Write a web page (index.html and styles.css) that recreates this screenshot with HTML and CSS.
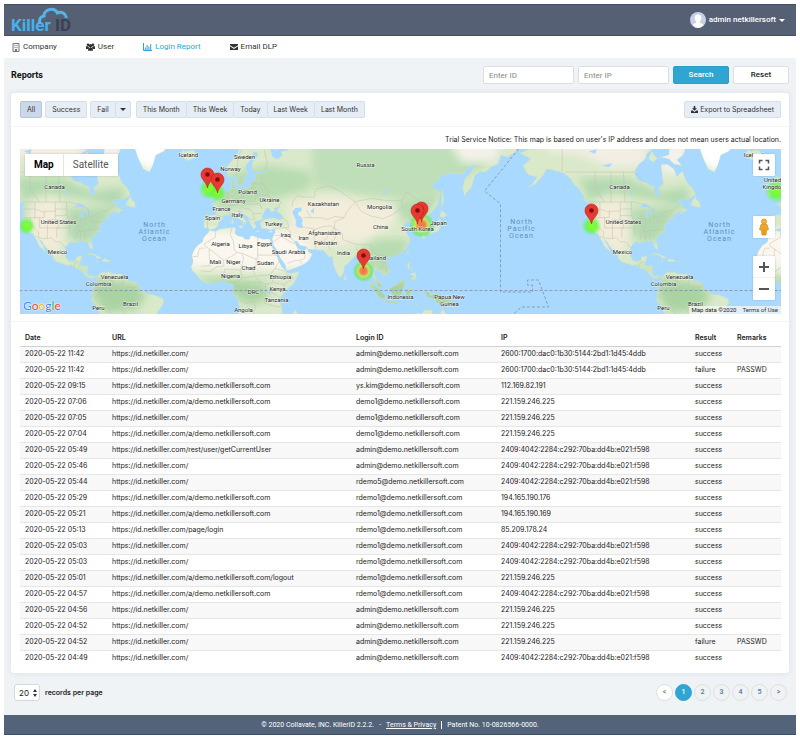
FILE: index.html
```html
<!DOCTYPE html>
<html lang="en">
<head>
    <meta charset="UTF-8">
    <meta name="viewport" content="width=device-width, initial-scale=1.0">
    <title>KillerID - Login Report</title>
    <link rel="stylesheet" href="styles.css">
</head>
<body>
    <header class="topbar">
        <a href="#" class="logo">
            <svg class="cloud" width="32" height="18" viewBox="0 0 32 18"><path d="M1.500 17C1 11 3 9.500 6 9C5.500 3 16 -1 19.500 6C24 4 28 7 28.500 11" fill="none" stroke="#57b4e8" stroke-width="3"/></svg>
            <span class="logo-killer">Killer</span> <span class="logo-id">ID</span>
        </a>
        <button class="account">
            <svg width="16" height="16" viewBox="0 0 16 16"><circle cx="8" cy="8" r="8" fill="#c9cfe4"/><path d="M8 2.500c2.300 0 3.500 1.600 3.300 3.800c-.1 1.500-.8 2.600-1.500 3.200v1.200c1.800.5 3.100 1 3.400 2.500A8 8 0 0 1 8 16a8 8 0 0 1-5.200-2.800c.3-1.500 1.600-2 3.400-2.500V9.500C5.500 8.900 4.800 7.800 4.700 6.300C4.500 4.100 5.700 2.500 8 2.500z" fill="#fff"/></svg>
            admin netkillersoft
            <span class="caret"></span>
        </button>
    </header>
    <nav>
        <ul>
            <li><a href="#"><svg width="8" height="9" viewBox="0 0 8 9"><path d="M1 .5h6v8H1z" fill="#f4f4f4" stroke="#777"/><path d="M2.500 2h1v1h-1zM4.500 2h1v1h-1zM2.500 4h1v1h-1zM4.500 4h1v1h-1zM3 6h2v2.500H3z" fill="#777"/></svg>Company</a></li>
            <li><a href="#"><svg width="9" height="8" viewBox="0 0 9 8"><path d="M2 .5a1.300 1.300 0 1 1 0 2.600a1.300 1.300 0 0 1 0-2.600zM7 .5a1.300 1.300 0 1 1 0 2.600a1.300 1.300 0 0 1 0-2.600zM4.500 1a1.700 1.700 0 1 1 0 3.400a1.700 1.700 0 0 1 0-3.400zM0 3.300h2.300l.7 1.200L2 6H0zM9 3.300H6.700L6 4.500L7 6h2zM2 7.800c0-2.300.6-3.200 2.500-3.200s2.500.9 2.500 3.200z" fill="#333"/></svg>User</a></li>
            <li><a href="#" class="active"><svg width="9" height="8" viewBox="0 0 9 8"><path d="M.5 0v7.500H9M2.300 7V4.500M4.100 7V2M5.900 7V3.500M7.700 7V1" fill="none" stroke="#2fa4d4"/></svg>Login Report</a></li>
            <li><a href="#"><svg width="8" height="8" viewBox="0 0 8 8"><path d="M0 1h8v1.200L4 4.800L0 2.200zM0 3.300l4 2.600l4-2.600V7H0z" fill="#333"/></svg>Email DLP</a></li>
        </ul>
    </nav>
    <main>
        <div class="title-row">
            <h1>Reports</h1>
            <form class="search">
                <input type="text" placeholder="Enter ID" aria-label="Enter ID">
                <input type="text" placeholder="Enter IP" aria-label="Enter IP">
                <button type="button" class="btn-search">Search</button>
                <button type="reset" class="btn-reset">Reset</button>
            </form>
        </div>
        <section class="panel">
            <div class="toolbar">
                <button class="btn active">All</button>
                <button class="btn">Success</button>
                <div class="group">
                    <button class="btn">Fail</button>
                    <button class="btn more" aria-label="More"><span class="caret"></span></button>
                </div>
                <div class="group range">
                    <button class="btn">This Month</button>
                    <button class="btn">This Week</button>
                    <button class="btn">Today</button>
                    <button class="btn">Last Week</button>
                    <button class="btn">Last Month</button>
                </div>
                <button class="btn export"><svg width="7" height="7" viewBox="0 0 7 7"><path d="M2.700 0h1.600v2.300H6L3.500 4.800L1 2.300h1.700zM0 4.500h1.700l1.800 1.400l1.800-1.400H7V7H0z" fill="#333"/></svg>Export to Spreadsheet</button>
            </div>
            <div class="map-block">
                <p class="notice">Trial Service Notice: This map is based on user's IP address and does not mean users actual location.</p>
                <div class="map">
                    <svg class="map-canvas" viewBox="0 0 762 165" preserveAspectRatio="xMidYMid slice">
                        <defs>
                            <clipPath id="land-clip"><path id="clip-path"/></clipPath>
                            <filter id="soft"><feGaussianBlur stdDeviation="4"/></filter>
                            <radialGradient id="heat">
                                <stop offset="0" stop-color="#f5703c"/>
                                <stop offset=".3" stop-color="#f5803c" stop-opacity=".9"/>
                                <stop offset=".5" stop-color="#d8e040" stop-opacity=".8"/>
                                <stop offset=".75" stop-color="#5cf04a" stop-opacity=".7"/>
                                <stop offset="1" stop-color="#5cf04a" stop-opacity="0"/>
                            </radialGradient>
                            <radialGradient id="cool">
                                <stop offset="0" stop-color="#8cff20"/>
                                <stop offset=".5" stop-color="#62fa3c" stop-opacity=".85"/>
                                <stop offset="1" stop-color="#62fa3c" stop-opacity="0"/>
                            </radialGradient>
                            <g id="pin">
                                <path d="M0 0C-.8-6-6.500-8-6.500-13.500a6.500 6.500 0 0 1 13 0C6.500-8 .8-6 0 0z" fill="#e8382f" stroke="#b8231c" stroke-width=".6"/>
                                <circle cy="-13.500" r="2.300" fill="#7c0f12"/>
                            </g>
                        </defs>
                        <rect width="762" height="165" fill="#a9d9fe"/>
                        <g id="world">
                            <path id="land" fill="#d9e9c9" stroke="#c4dfce" stroke-width=".5"/>
                            <g id="biomes" clip-path="url(#land-clip)"></g>
                            <path id="lakes" fill="#a9d9fe"/>
                            <path id="borders" fill="none" stroke="#c3bfb0" stroke-width=".5"/>
                        </g>
                        <use href="#world" x="565"/>
                        <g class="lines">
                            <path d="M0 141.500H762"/>
                            <path d="M499 0L465 42L481 55V143H513V136H508V131H519L529 158H502L494 165"/>
                        </g>
                        <circle cx="7" cy="77" r="9" fill="url(#cool)"/>
                        <circle cx="190" cy="40" r="11" fill="url(#cool)"/>
                        <circle cx="198" cy="44" r="9" fill="url(#cool)"/>
                        <circle cx="757" cy="42" r="12" fill="url(#cool)"/>
                        <circle cx="572" cy="77" r="10" fill="url(#cool)"/>
                        <circle cx="402" cy="76" r="13" fill="url(#heat)"/>
                        <circle cx="344" cy="122" r="11" fill="url(#heat)"/>
                        <g class="labels">
                            <text x="35" y="40">Canada</text><text x="39" y="75">United States</text><text x="38" y="105">Mexico</text>
                            <text x="95" y="130">Venezuela</text><text x="79" y="137">Colombia</text><text x="79" y="161">Peru</text><text x="111" y="157">Brazil</text>
                            <text x="600" y="40">Canada</text><text x="604" y="75">United States</text><text x="603" y="105">Mexico</text>
                            <text x="660" y="130">Venezuela</text><text x="644" y="137">Colombia</text><text x="644" y="161">Peru</text><text x="676" y="157">Brazil</text>
                            <text x="169" y="8">Iceland</text><text x="734" y="8">Iceland</text>
                            <text x="225" y="10">Sweden</text><text x="211" y="22">Norway</text><text x="228" y="45">Poland</text>
                            <text x="214" y="54">Germany</text><text x="250" y="53">Ukraine</text><text x="202" y="62">France</text>
                            <text x="193" y="71">Spain</text><text x="218" y="68">Italy</text><text x="254" y="77">Turkey</text>
                            <text x="346" y="18">Russia</text><text x="304" y="57">Kazakhstan</text><text x="360" y="60">Mongolia</text>
                            <text x="361" y="80">China</text><text x="266" y="88">Iraq</text><text x="284" y="91">Iran</text>
                            <text x="305" y="86">Afghanistan</text><text x="306" y="96">Pakistan</text><text x="201" y="97">Algeria</text>
                            <text x="226" y="99">Libya</text><text x="245" y="97">Egypt</text><text x="269" y="105">Saudi Arabia</text>
                            <text x="324" y="106">India</text><text x="355" y="111">Thailand</text><text x="196" y="115">Mali</text>
                            <text x="214" y="115">Niger</text><text x="246" y="116">Sudan</text><text x="229" y="121">Chad</text>
                            <text x="211" y="129">Nigeria</text><text x="261" y="130">Ethiopia</text><text x="234" y="145">DRC</text>
                            <text x="258" y="142">Kenya</text><text x="257" y="153">Tanzania</text><text x="224" y="163">Angola</text>
                            <text x="381" y="150">Indonesia</text><text x="430" y="150">Papua New</text><text x="430" y="157">Guinea</text>
                            <text x="419" y="76">Japan</text><text x="398" y="82">South Korea</text>
                            <text x="753" y="33">United</text><text x="755" y="40">Kingdom</text>
                        </g>
                        <g class="oceans">
                            <text x="135" y="78">North</text><text x="135" y="85">Atlantic</text><text x="135" y="92">Ocean</text>
                            <text x="502" y="75">North</text><text x="502" y="82">Pacific</text><text x="502" y="89">Ocean</text>
                            <text x="700" y="78">North</text><text x="700" y="85">Atlantic</text><text x="700" y="92">Ocean</text>
                        </g>
                        <use href="#pin" x="188" y="39"/>
                        <use href="#pin" x="198" y="44"/>
                        <use href="#pin" x="402" y="73"/>
                        <use href="#pin" x="398" y="75"/>
                        <use href="#pin" x="344" y="120"/>
                        <use href="#pin" x="572" y="75"/>
                    </svg>
                    <div class="map-type">
                        <button class="selected">Map</button>
                        <button>Satellite</button>
                    </div>
                    <div class="map-tools">
                        <button aria-label="Fullscreen"><svg width="12" height="12" viewBox="0 0 12 12"><path d="M1.500 4.500v-3h3M7.500 1.500h3v3M10.500 7.500v3h-3M4.500 10.500h-3v-3" fill="none" stroke="#555" stroke-width="1.500"/></svg></button>
                        <button class="pegman" aria-label="Street View"><svg width="12" height="18" viewBox="0 0 12 18"><path d="M3 6.500h6l1.500 5l-1.800.8L8 17H4l-.7-4.700l-1.800-.8z" fill="#f2a51f" stroke="#c77f13" stroke-width=".6"/><circle cx="6" cy="3.500" r="2.600" fill="#f6b436" stroke="#c77f13" stroke-width=".6"/><path d="M6 11v6" stroke="#c77f13" stroke-width=".6"/></svg></button>
                        <div class="zoom">
                            <button aria-label="Zoom in"><svg width="12" height="12" viewBox="0 0 12 12"><path d="M1 6h10M6 1v10" stroke="#555" stroke-width="2"/></svg></button>
                            <button aria-label="Zoom out"><svg width="12" height="12" viewBox="0 0 12 12"><path d="M1 6h10" stroke="#555" stroke-width="2"/></svg></button>
                        </div>
                    </div>
                    <a href="#" class="google"><span class="g-blue">G</span><span class="g-red">o</span><span class="g-yellow">o</span><span class="g-blue">g</span><span class="g-green">l</span><span class="g-red">e</span></a>
                    <div class="map-legal"><span>Map data ©2020</span><a href="#">Terms of Use</a></div>
                </div>
            </div>
            <div class="table-block">
                <table>
                    <colgroup>
                        <col class="c-date"><col class="c-url"><col class="c-login"><col class="c-ip"><col class="c-result"><col class="c-remarks">
                    </colgroup>
                    <thead>
                        <tr><th>Date</th><th>URL</th><th>Login ID</th><th>IP</th><th>Result</th><th>Remarks</th></tr>
                    </thead>
                    <tbody>
                        <tr><td>2020-05-22 11:42</td><td>https://id.netkiller.com/</td><td>admin@demo.netkillersoft.com</td><td>2600:1700:dac0:1b30:5144:2bd1:1d45:4ddb</td><td>success</td><td></td></tr>
                        <tr><td>2020-05-22 11:42</td><td>https://id.netkiller.com/</td><td>admin@demo.netkillersoft.com</td><td>2600:1700:dac0:1b30:5144:2bd1:1d45:4ddb</td><td>failure</td><td>PASSWD</td></tr>
                        <tr><td>2020-05-22 09:15</td><td>https://id.netkiller.com/a/demo.netkillersoft.com</td><td>ys.kim@demo.netkillersoft.com</td><td>112.169.82.191</td><td>success</td><td></td></tr>
                        <tr><td>2020-05-22 07:06</td><td>https://id.netkiller.com/a/demo.netkillersoft.com</td><td>demo1@demo.netkillersoft.com</td><td>221.159.246.225</td><td>success</td><td></td></tr>
                        <tr><td>2020-05-22 07:05</td><td>https://id.netkiller.com/</td><td>demo1@demo.netkillersoft.com</td><td>221.159.246.225</td><td>success</td><td></td></tr>
                        <tr><td>2020-05-22 07:04</td><td>https://id.netkiller.com/a/demo.netkillersoft.com</td><td>demo1@demo.netkillersoft.com</td><td>221.159.246.225</td><td>success</td><td></td></tr>
                        <tr><td>2020-05-22 05:49</td><td>https://id.netkiller.com/rest/user/getCurrentUser</td><td>admin@demo.netkillersoft.com</td><td>2409:4042:2284:c292:70ba:dd4b:e021:f598</td><td>success</td><td></td></tr>
                        <tr><td>2020-05-22 05:46</td><td>https://id.netkiller.com/</td><td>admin@demo.netkillersoft.com</td><td>2409:4042:2284:c292:70ba:dd4b:e021:f598</td><td>success</td><td></td></tr>
                        <tr><td>2020-05-22 05:44</td><td>https://id.netkiller.com/</td><td>rdemo5@demo.netkillersoft.com</td><td>2409:4042:2284:c292:70ba:dd4b:e021:f598</td><td>success</td><td></td></tr>
                        <tr><td>2020-05-22 05:29</td><td>https://id.netkiller.com/a/demo.netkillersoft.com</td><td>rdemo1@demo.netkillersoft.com</td><td>194.165.190.176</td><td>success</td><td></td></tr>
                        <tr><td>2020-05-22 05:21</td><td>https://id.netkiller.com/a/demo.netkillersoft.com</td><td>rdemo1@demo.netkillersoft.com</td><td>194.165.190.169</td><td>success</td><td></td></tr>
                        <tr><td>2020-05-22 05:13</td><td>https://id.netkiller.com/page/login</td><td>rdemo1@demo.netkillersoft.com</td><td>85.209.178.24</td><td>success</td><td></td></tr>
                        <tr><td>2020-05-22 05:03</td><td>https://id.netkiller.com/</td><td>rdemo1@demo.netkillersoft.com</td><td>2409:4042:2284:c292:70ba:dd4b:e021:f598</td><td>success</td><td></td></tr>
                        <tr><td>2020-05-22 05:03</td><td>https://id.netkiller.com/</td><td>rdemo1@demo.netkillersoft.com</td><td>2409:4042:2284:c292:70ba:dd4b:e021:f598</td><td>success</td><td></td></tr>
                        <tr><td>2020-05-22 05:01</td><td>https://id.netkiller.com/a/demo.netkillersoft.com/logout</td><td>rdemo1@demo.netkillersoft.com</td><td>221.159.246.225</td><td>success</td><td></td></tr>
                        <tr><td>2020-05-22 04:57</td><td>https://id.netkiller.com/a/demo.netkillersoft.com</td><td>rdemo1@demo.netkillersoft.com</td><td>2409:4042:2284:c292:70ba:dd4b:e021:f598</td><td>success</td><td></td></tr>
                        <tr><td>2020-05-22 04:56</td><td>https://id.netkiller.com/</td><td>admin@demo.netkillersoft.com</td><td>221.159.246.225</td><td>success</td><td></td></tr>
                        <tr><td>2020-05-22 04:52</td><td>https://id.netkiller.com/</td><td>admin@demo.netkillersoft.com</td><td>221.159.246.225</td><td>success</td><td></td></tr>
                        <tr><td>2020-05-22 04:52</td><td>https://id.netkiller.com/</td><td>admin@demo.netkillersoft.com</td><td>221.159.246.225</td><td>failure</td><td>PASSWD</td></tr>
                        <tr><td>2020-05-22 04:49</td><td>https://id.netkiller.com/</td><td>admin@demo.netkillersoft.com</td><td>2409:4042:2284:c292:70ba:dd4b:e021:f598</td><td>success</td><td></td></tr>
                    </tbody>
                </table>
            </div>
        </section>
        <div class="pager">
            <label class="per-page">
                <span class="select-wrap">
                    <select><option>20</option><option>50</option><option>100</option></select>
                    <svg width="4" height="8" viewBox="0 0 4 8"><path d="M2 0l2 3H0zM2 8L0 5h4z" fill="#333"/></svg>
                </span>
                records per page
            </label>
            <div class="pages">
                <a href="#" class="prev">&lt;</a>
                <a href="#" class="current">1</a>
                <a href="#">2</a>
                <a href="#">3</a>
                <a href="#">4</a>
                <a href="#">5</a>
                <a href="#" class="next">&gt;</a>
            </div>
        </div>
    </main>
    <footer>
        <span>© 2020 Collavate, INC. KillerID 2.2.2.</span>
        <span>-</span>
        <a href="#">Terms &amp; Privacy</a>
        <span class="patent">Patent No. 10-0826566-0000.</span>
    </footer>
    <script src="map.js"></script>
</body>
</html>
```

FILE: styles.css
```css
* {
    box-sizing: border-box;
}
body {
    margin: 4px;
    font-family: Roboto, "Liberation Sans", sans-serif;
    font-size: 8px;
    line-height: 10px;
    color: #222;
    background-color: #fff;
}
button, input, select {
    font: inherit;
    color: inherit;
    margin: 0;
}
button {
    cursor: pointer;
}
svg {
    display: block;
    flex-shrink: 0;
}
.caret {
    display: inline-block;
    border: 3px solid transparent;
    border-top-color: currentColor;
    border-bottom: 0;
}

/* header */
.topbar {
    display: flex;
    justify-content: space-between;
    align-items: center;
    height: 32px;
    padding: 0 10px 0 7px;
    background-color: #566075;
    border-top: 1px solid #464f62;
    border-bottom: 1px solid #464f62;
}
.logo {
    position: relative;
    padding-top: 10px;
    font-size: 17px;
    line-height: 18px;
    font-weight: 700;
    text-decoration: none;
}
.cloud {
    position: absolute;
    left: 27px;
    top: 1px;
}
.logo-killer {
    color: #48b0ea;
}
.logo-id {
    color: #3a414f;
}
.account {
    display: flex;
    align-items: center;
    gap: 3px;
    padding: 0;
    border: 0;
    background: none;
    color: #fff;
    font-weight: 500;
}
.account .caret {
    margin-right: 1px;
}

/* navigation */
nav ul {
    display: flex;
    gap: 29px;
    height: 22px;
    margin: 0;
    padding: 0 8px;
    align-items: center;
    list-style-type: none;
}
nav a {
    display: flex;
    align-items: center;
    gap: 3px;
    color: #333;
    text-decoration: none;
}
nav a.active {
    color: #2fa4d4;
}

main {
    padding: 8px 7px 14px;
    background-color: #eff3f6;
}
.title-row {
    display: flex;
    justify-content: space-between;
    align-items: center;
}
h1 {
    margin: 0;
    font-size: 9px;
    font-weight: 700;
    color: #111;
}
.search {
    display: flex;
    gap: 4px;
}
.search input {
    width: 91px;
    height: 18px;
    padding: 0 5px;
    border: 1px solid #dcdfe3;
    border-radius: 2px;
    background-color: #fff;
}
.search input::placeholder {
    color: #888;
}
.search button {
    width: 56px;
    height: 18px;
    padding: 0;
    border-radius: 2px;
    font-weight: 500;
}
.btn-search {
    border: 1px solid #2d9fca;
    background-color: #2fa5d2;
    color: #fff;
}
.btn-reset {
    border: 1px solid #dcdfe3;
    background-color: #fff;
}

/* report panel */
.panel {
    margin-top: 9px;
    font-family: Inter, Roboto, sans-serif;
    font-size: 7px;
    background-color: #fff;
    border-radius: 3px;
    box-shadow: 0 0 6px rgba(80, 100, 120, 0.12);
}
.toolbar {
    display: flex;
    gap: 3px;
    padding: 8px 8px 8px 9px;
    border-bottom: 1px solid #f5f6f7;
}
.btn {
    display: flex;
    align-items: center;
    justify-content: center;
    gap: 2px;
    height: 17px;
    padding: 0 6px;
    border: 1px solid #d6e0ea;
    border-radius: 2px;
    background-color: #e6edf5;
    color: #333;
}
.btn.active {
    background-color: #cbd8ea;
    border-color: #b3c5dc;
}
.btn.more {
    padding: 0 4px;
}
.group {
    display: flex;
}
.group .btn + .btn {
    margin-left: -1px;
}
.range {
    margin-left: 2px;
}
.export {
    margin-left: auto;
}
.map-block {
    padding: 8px 8px 7px 9px;
    border-bottom: 1px solid #f3f4f5;
}
.notice {
    margin: 0 0 4px;
    text-align: right;
}

/* map */
.map {
    position: relative;
    font-family: Roboto, sans-serif;
}
.map-canvas {
    width: 100%;
    height: 165px;
}
.lines {
    fill: none;
    stroke: #7f8fa8;
    stroke-width: 1;
    stroke-dasharray: 3 2;
    opacity: 0.8;
}
.labels {
    font-size: 6px;
    fill: #222;
    text-anchor: middle;
    stroke: rgba(255, 255, 255, 0.7);
    stroke-width: 1px;
    paint-order: stroke;
}
.oceans {
    font-size: 7px;
    letter-spacing: 1px;
    fill: #5b8fc4;
    text-anchor: middle;
}
.map button {
    display: flex;
    align-items: center;
    justify-content: center;
    height: 22px;
    padding: 0;
    border: 0;
    background-color: #fff;
}
.map-type {
    position: absolute;
    left: 5px;
    top: 5px;
    display: flex;
    font-size: 10px;
    box-shadow: 0 0 2px rgba(0, 0, 0, 0.2);
}
.map-type button {
    padding: 0 9px;
    color: #555;
}
.map-type .selected {
    color: #000;
    font-weight: 700;
    border-right: 1px solid #e6e6e6;
}
.map-tools {
    position: absolute;
    right: 6px;
    top: 5px;
    width: 22px;
}
.map-tools button {
    width: 22px;
    border-radius: 1px;
    box-shadow: 0 0 2px rgba(0, 0, 0, 0.2);
}
.map-tools .pegman {
    margin: 40px 0 18px;
}
.google {
    position: absolute;
    left: 3px;
    bottom: 1px;
    font-family: Lato, sans-serif;
    font-size: 12px;
    line-height: 14px;
    text-decoration: none;
    text-shadow: 0 0 1px #fff, 0 0 1px #fff, 0 0 2px #fff;
}
.g-blue {
    color: #4285f4;
}
.g-red {
    color: #ea4335;
}
.g-yellow {
    color: #f5b400;
}
.g-green {
    color: #34a853;
}
.map-legal {
    position: absolute;
    right: 0;
    bottom: 0;
    display: flex;
    gap: 6px;
    padding: 0 3px;
    font-size: 6px;
    line-height: 8px;
    background-color: rgba(245, 245, 245, 0.75);
}
.map-legal a {
    color: #333;
    text-decoration: none;
}

/* log table */
.table-block {
    padding: 8px 8px 7px 9px;
}
table {
    width: 100%;
    table-layout: fixed;
    border-collapse: collapse;
    line-height: 8px;
}
.c-date {
    width: 87px;
}
.c-login {
    width: 145px;
}
.c-ip {
    width: 194px;
}
.c-result {
    width: 42px;
}
.c-remarks {
    width: 49px;
}
th, td {
    height: 16px;
    padding: 0 0 0 5px;
    text-align: left;
    white-space: nowrap;
}
th {
    font-weight: 600;
    border-bottom: 1px solid #cfd2d5;
}
td {
    border-top: 1px solid #e5e6e7;
}
tbody tr:nth-child(odd) {
    background-color: #f8f8f8;
}

/* pager */
.pager {
    display: flex;
    justify-content: space-between;
    align-items: center;
    margin-top: 11px;
    padding: 0 2px 0 3px;
}
.per-page {
    display: flex;
    align-items: center;
    gap: 5px;
    font-family: Inter, Roboto, sans-serif;
    font-size: 7px;
    font-weight: 600;
}
.select-wrap {
    position: relative;
}
.select-wrap svg {
    position: absolute;
    right: 3px;
    top: 5px;
    pointer-events: none;
}
select {
    display: block;
    appearance: none;
    width: 26px;
    height: 17px;
    padding: 0 4px;
    border: 1px solid #d4d8dc;
    border-radius: 3px;
    background-color: #fff;
    font-size: 8px;
    font-weight: 400;
}
.pages {
    display: flex;
    gap: 2px;
}
.pages a {
    width: 17px;
    height: 17px;
    border: 1px solid #dddfe1;
    border-radius: 50%;
    line-height: 15px;
    font-size: 7px;
    font-weight: 500;
    text-align: center;
    text-decoration: none;
    color: #4a78ad;
    background-color: #f0f2f4;
}
.pages .prev {
    color: #777;
    background-color: #fff;
}
.pages .current {
    color: #fff;
    border-color: #2fa5d2;
    background-color: #2fa5d2;
}

footer {
    display: flex;
    justify-content: center;
    align-items: center;
    gap: 5px;
    height: 20px;
    font-size: 7px;
    color: #fff;
    background-color: #53647a;
    border-bottom: 1px solid #3f4d60;
}
footer a {
    color: #fff;
}
.patent {
    padding-left: 5px;
    border-left: 1px solid #fff;
    line-height: 8px;
}
```

FILE: map.js
```js
// Mercator world, 565px round the equator
const SCALE = 565 / 360;
const R = 565 / (2 * Math.PI);

function project(lon, lat) {
    const y = Math.log(Math.tan(Math.PI / 4 + lat * Math.PI / 360));
    return (199 + lon * SCALE).toFixed(1) + ' ' + (141.5 - R * y).toFixed(1);
}

// "lon,lat lon,lat ..." -> path data
function toPath(points, closed) {
    const coords = points.split(' ').map(p => {
        const [lon, lat] = p.split(',').map(Number);
        return project(lon, lat);
    });
    return 'M' + coords.join('L') + (closed ? 'Z' : '');
}

const land = [
    // North America
    '-168,72 -162,66.5 -168,65.5 -161,64 -166,62 -164,60 -162,59 -157,58.5 -160,56 -164,54.5 -158,56 -153,59 -151,61 -146,60.5 -140,59.7 -136,58 -133,55.5 -130,54 -127,51 -123,49 -124.5,48 -124,46 -124.5,43 -124,40 -122,37 -120.5,34.6 -118,34 -117,32 -115.5,30 -114,27 -112,25.5 -110,23 -111.5,26.5 -113,29 -114.8,31.5 -112.5,30 -111,27.5 -109,25.5 -107,24 -105.5,21.5 -105.5,20 -103,18 -100,17 -96,15.8 -94,16.2 -92,14.5 -88,13 -86,11 -85,9.8 -83,8.3 -80.5,7.3 -79,8.8 -77.5,7.5 -77,8.7 -80,9.4 -82.5,9.2 -83.7,11 -83.3,15 -86,15.8 -88.6,15.8 -88,18 -87,21.4 -90.3,21 -91,18.7 -94.5,18.2 -96.5,19.5 -97.8,22.5 -97.2,27 -94.5,29.5 -91,29.3 -89,29 -89,30.3 -85,29.8 -83.5,30 -82.7,27.5 -81,25.2 -80.1,26.5 -81.4,31 -78,34 -75.6,35.4 -76.2,38 -74,39.5 -73.5,41 -70,41.8 -70.7,43 -67,44.7 -64.5,45.2 -66,43.6 -61,45.5 -64,46.5 -65,48.8 -70,47.5 -66,50.2 -60,50.2 -56,52 -58,54.5 -61.5,56.5 -64.5,60.2 -68,58.5 -70,61 -74,62.3 -78,62.3 -77.5,60 -77,57.5 -76.6,56 -79.5,54.7 -79,51.5 -81,51.5 -82.3,53 -82.3,55.2 -85,55.4 -88,56.6 -92.5,57.2 -94.5,59 -94.5,60.5 -92,62.5 -88,64 -87,65.5 -84,66.3 -81.5,68 -82,72',
    // Baffin and Southampton
    '-80,72 -72,68 -73,65 -78,64.4 -73,64 -70,62.6 -65,62 -68,63.7 -64,65 -62,67 -66,72',
    '-86,64 -83,63 -80.5,64 -84,66',
    // Newfoundland, Vancouver
    '-59.3,47.8 -55.5,46.9 -53,46.7 -53.3,49 -55.5,50 -56,51.5 -58,49.5',
    '-128,50.7 -125,50 -123.5,48.3 -126,49.2',
    // Greenland, Iceland
    '-55,72 -53.5,67 -51,64 -48,61 -44,60 -42,62 -40,65 -35,66 -31,68 -22,70.3 -20,72',
    '-24,65.5 -22,64 -19,63.4 -15,64.3 -13.7,65.2 -16,66.4 -21,66 -22.5,66.4',
    // Caribbean
    '-85,21.9 -82,23.1 -79,22.5 -74.3,20.2 -77.5,19.9 -78.5,21.5 -82,22.5',
    '-74.3,18.4 -72.8,19.9 -68.5,18.6 -71,17.8',
    '-78.2,18.4 -76.3,18.1 -77.5,17.8',
    '-67,18.3 -65.7,18.3 -66,18',
    // South America
    '-77.4,8.5 -75.5,10.7 -72,12.2 -71,11 -70,12.1 -68,10.8 -64,10.4 -62,10.6 -60.5,8.6 -57,6.2 -54,5.8 -51.5,4.2 -50,1 -50,-1 -48,-0.7 -44.5,-2.5 -41,-2.9 -38.5,-3.8 -35.3,-5.2 -34.8,-7.5 -37,-11.5 -39,-13.5 -39,-18 -41,-22 -70,-22 -70.3,-18 -76,-14 -78.5,-9 -81.2,-6 -80,-3 -81,-1 -80,1 -78.5,2.5 -77.3,4 -77.6,7',
    // Africa
    '-5.9,35.8 -2,35.1 1,36.4 5,36.8 10,37.3 11,36.8 10.2,34.2 12,32.9 15.3,32.2 17,30.8 20,30.8 20,32.5 22,32.9 25,31.7 29,30.9 32.3,31.2 34.2,28 33.3,27.8 35.5,24 37.2,21 38.5,18 40,15.2 43.2,12 43.2,11.3 46,10.8 51.2,11.9 50.5,9.5 48,4.5 44,1 41.5,-2 39.3,-4.7 38.8,-6.5 40.5,-10.5 40.6,-15 36,-19 35,-24 14,-24 11.8,-17 13.7,-12 13,-9 12,-5 9,-1 9.7,2 9.5,4 7,4.4 5.5,4.5 4.3,6.3 1.2,6 -2,4.8 -4,5.2 -7.5,4.4 -11,6.6 -13.2,8.8 -15,11 -16.7,12.5 -17.4,14.8 -16.3,17 -16.2,19.5 -17,21 -16,24 -14.5,26.2 -13,27.8 -11,28.8 -9.8,30 -9.7,31.5 -8,33.3 -6.5,34.5',
    '44,-17 46,-15.7 49.3,-12 50.4,-15.5 48,-22 44,-22',
    // Eurasia
    '-9,37 -9.4,39 -8.7,43 -2,43.4 -1.2,44.5 -2,47 -4.6,48.4 -1.5,48.7 -1.5,49.7 1.6,50.8 4,52 5,53.3 8,53.7 8.5,55 8.2,57 10.5,57.6 10.2,56 11,54.3 14,54 18.5,54.7 20,54.5 21,57 24,57.2 23.5,59.2 28,59.6 30,60 27,60.5 23,59.9 21.4,61 21.5,63 25,64.8 24.5,65.8 22,65.7 21.5,64.2 18,62.5 17.2,61 18.7,60 16.8,58.5 16.3,56.7 14.3,55.5 12.8,55.5 11.2,58.8 10.5,59.3 8,58.1 5.7,58.8 5,61.5 8,63.2 12,65.2 14,67.5 17,72 36,72 41,67 37,66.3 33,66.7 34.5,64.5 37.5,63.9 40.5,64.7 40,66 44,66.2 44,68 46,72 190,72 190,66 184,64.4 180,65 178,62.5 174,61.7 170,60 166,60 163.5,59 162,56.5 161,54.5 158,53 156.7,51 155.6,55 157,57.8 161,60 164,62.4 160,61.7 155,59.2 150,59.5 143,59.3 138,56.5 135.3,54.7 139,54 141.3,53 140.5,50 140,48 136,44.5 133,42.7 130.7,42.5 129.7,41 127.5,39.7 129.4,37 129.3,35.3 126.4,34.4 126.7,37.5 124.9,38 125,39.6 121.5,38.9 122,40.7 119,39.3 117.7,38.7 119,37.3 122.4,37.2 119.3,35 121.8,31.8 121.8,29.5 119.5,25.5 117,23.5 114,22.4 110.5,21.2 109.8,20.5 108,21.6 106,19.5 107,17 109.2,13 109,11.5 106.5,10 105,8.7 104.8,10.4 102.5,12.2 101,13.2 100,13.2 99.3,10 100.3,8 102,6.3 103.4,4 104,1.4 101.3,2.9 100.3,5.7 98.3,8.3 98.6,12 97.7,16.4 95,15.8 94.3,18 92.3,20.7 91.5,22.6 88.5,21.7 87,21.3 84.5,19 82,16.5 80.2,15.5 80,12 79,10 78,8.3 76.5,9 75,12 73,16.5 72.7,21 70.5,20.8 69,22.3 67,24.8 61.5,25.1 57.2,25.7 56,27 52,27.8 50,30.1 48,30 49.8,26.8 51,24.7 51.6,25.5 52,24.2 54.5,24.2 56.4,26.2 57,24 59.8,22.5 57.7,19 55,17 52,15.6 45,12.8 43.3,12.8 42.5,16.5 39.3,20.5 38,24 35,28 34.9,29.5 34.3,31.3 36,34.5 36,36.7 33,36.1 30.5,36.7 27.5,36.8 26.3,39.3 27.5,40.4 29.2,41.2 32,41.7 35,42 38,41 41.5,41.5 40,43.5 37,45 39,47.2 35,46.2 36.5,45.3 33.5,44.5 32.7,46 30.7,46.5 28.7,44 27.7,42.5 28.8,41.3 26,40.7 23.5,40.3 22.8,39.3 24,37.8 22.5,36.5 21.3,37.8 19.4,40.5 19.5,42 15,44.2 13.6,45.6 12.3,45.2 13.5,43.5 16,41.8 18.4,40 16.7,39.8 16,38 15.6,40 12.5,41.6 10.5,43 8.8,44.4 6.5,43.2 3.2,43.2 3,41.8 0,39.8 0,38.6 -2,36.8 -5.3,36.1 -6.5,37',
    // Britain and Ireland
    '-5.5,50.1 1,51 1.6,52.7 0,53.5 -1.6,55.4 -2.2,57.5 -3.2,58.6 -5.2,58.5 -6,56.5 -4.8,54.8 -3,53.9 -4.6,53 -5,51.7 -3,51.3',
    '-10,51.8 -6.3,52.2 -6,54 -7,55.3 -9.8,54',
    // Mediterranean islands
    '12.5,37.9 15.4,38.1 15.1,36.7', '8.3,39 9.6,39.3 9.4,41.2 8.3,40.8', '8.7,41.6 9.5,42 9.3,43', '23.5,35.3 26.2,35.2 25,34.9', '32.3,35 34.5,35.6 33.5,34.6',
    // Japan, Sakhalin
    '130,31.3 129.7,33.3 132,34.3 135,33.7 137,34.6 140,35.1 141,37 142,39.5 141.3,41.3 140,40.8 139.3,38.3 136.8,37 133,35.5 131,34.5 131.8,33 131.3,31.4',
    '140,41.5 141,42.6 143.3,42 145.5,43.4 142,45.4 141.2,43.2', '142,46 143.5,49.5 143,54.2 142,53 142,49',
    // South East Asia and Oceania
    '121,25.2 120,23.2 120.8,22', '109,18.5 111,19.9 110.3,18.3', '80,9.7 81.8,7.5 80.3,6',
    '120.3,16 122,18.5 121.5,14.5 124,12.8 123,13.5 120.5,14', '122,10.5 125.3,11.5 126.3,7.5 124,6.3 122,7.4 125,9',
    '95.3,5.6 98,4.5 103,0 106,-3 105.8,-5.8 102.3,-4 99,0', '105.5,-6.3 108.5,-6.6 114.4,-7.8 114.3,-8.7 106.5,-7.4',
    '109,1.5 111.5,2.6 115,5 117,7 119,5.2 117.5,1 116,-3.5 111.7,-3.3 110,-1.2', '119.6,0.8 124.8,1.5 120.6,0.5 123,-1 121.5,-2 122.7,-4.8 120.3,-3 119.5,-5.5',
    '131,-0.8 134,-0.9 135,-3.3 138,-1.7 144.5,-3.8 147.7,-6 150.5,-10.5 146,-8.8 143,-9.2 139,-8 138,-5.7 133,-4', '148.5,-5.8 151.5,-4.3 152.2,-4.7 150,-6.2',
    '113,-24 114,-21.8 121,-19.3 124,-16 127,-14 129.7,-15 131,-12 136.7,-12.2 135.8,-15 139.5,-17.5 141.3,-15 142.5,-10.8 145.3,-15.5 149,-20.5 152,-24', '124,-10 127,-8.5 125,-9'
];

const lakes = [
    '47,44.7 49,46.4 52.8,46.6 53,45.2 51,44.5 50.5,43.5 53,42 53.8,40.5 53,39.2 54,37 50.5,37.2 49,38.5 49.5,40.3',
    '58.5,45 61,46.5 60.5,44', '-92,46.7 -88.5,48.6 -84.8,47 -88,46.8', '-87.8,42 -86.3,42.2 -86,44.7 -85,45.9 -82.5,45.3 -82.4,43.2 -83.8,44 -84.5,45.5 -87,45.7 -87.8,44',
    '-83,41.8 -79,42.8 -81,42', '-79.5,43.3 -76.4,43.8 -77,44', '-98.5,53.7 -97,51 -96.5,52', '-116,62 -111,61.5 -109,62.7', '-124,66 -120,65.3 -119,66.5', '-111,59 -106,59.3', '31,60.5 32.7,61.3 32,60', '35,61 36,62.5 35.5,61', '104,51.6 108,53 110,55.5 106.5,53', '32,0.3 34,0.2 33,-2.5 31.9,-2'
];

const borders = [
    '-123,49 -95,49 -89,48 -83,46 -82.5,42 -79,43 -75,45 -71,45.3 -67,47.2',
    '-117,32.5 -111,31.3 -106.5,31.8 -104,29.5 -101,29.8 -97.2,26', '-141,60.3 -141,72', '-139,60 -120,60 -95,60', '-120,60 -120,54 -114,49', '-110,60 -110,49', '-102,60 -101,49', '-95,60 -89,56.8', '-92,14.5 -92,16 -91,17.8 -89,17.8',
    '-124,46 -117,46 -117,42', '-124,42 -111,42 -111,45 -104,45 -104,49', '-120,42 -120,39 -114.6,35 -114.6,32.7', '-114,42 -114,37 -94.6,37', '-109,41 -109,31.3', '-109,41 -102,41 -102,37 -103,37 -103,32', '-104,45 -104,41', '-104,43 -96.5,43', '-104,46 -96.5,46', '-117,49 -117,46 -111,44.5', '-97,49 -96.5,43 -95,40 -94.6,33.5', '-91,43 -91,40 -89,36 -91,33 -91,31', '-88,42 -88,37', '-85,42 -84.8,39', '-88,35 -88,30.3', '-85.5,35 -85,31', '-90,35 -76,36.5', '-80.5,42 -80.5,40 -75,40',
    '-8.7,27.3 -8.7,28.7 -2,32 -1.8,35', '-8.7,27.3 -4.8,25 3,19.2 4.3,19 12,23.5 10,25 9.5,30 7.5,33.5 8.5,37', '-17,21 -13,21.3 -13,23.4 -12,26 -8.7,26', '-4.8,25 -6,25 -5.5,15.5 -11.5,15.3', '3,19.2 3.5,15.5 -1,15 -5,12 -11.3,12.3', '12,23.5 15,23 16,20 14,13 4,13.5 2.5,6.3', '25,31.7 25,20 24,20 24,15.7 22,13 23.5,9', '15,23 24,19.5', '25,22 37,22', '14,13 15,8 13,6 9,5', '15,8 23,9 27,5', '24,9 33,10 36,14 38.5,18', '36,14 42.5,12', '33,10 35,5 42,4 48,8 43,11', '42,4 41,-1.7', '35,5 30,4 27,5 19,5 16,1 13,-5', '30,4 30,-4 29,-8 34,-9.5 40.5,-10.7', '31,-1 34,-1 39,-4.7', '13,-6 17,-8 22,-7 24,-11 22,-13 24,-17',
    '-7,37 -7,42', '-1.7,43.3 3,42.4', '2.5,51 6,49.5 8,48.9 7.5,47.5 6,46 7,44', '6,53 6,50', '14,54 15,51 12,50 13,48 8,47.5', '15,51 19,49.5 23,49 24,52 23,54.5 20,54.5', '13,46 17,48 22,48.3', '16,46.5 20,46 22,44 28,44', '22,44 23,41.5 20,41', '24,52 31,51.8 35,50 40,49 38,47.2', '28,56 32,53 31,51.8', '28,46 26,48.3 22,48', '11.5,59 12.5,64 16,68', '30,60.5 31,63 29,66.5', '27,59 28,56 21,56',
    '36,36.7 42,37.2 44.7,37 44,40 41.5,41.5', '42,37.2 46,35 46,32 48,30', '36,33 39,33 47,29 48.5,28.5', '35,29.5 39,32', '44,17 48,18.5 52,19 53,16.7', '52,19 55,20 55,23', '54,37.4 61,36.5 61,31 62,27 61.5,25', '61,36 66,37.5 71,38 74,37 70,34 69,31.5 66,30 61,29.8', '71,24.7 70,28 74,31 75,34 74,37', '74,37 79,34 79,31 88,28 97,28 98,24 101,22 108,21.6', '74,37 74,40 80,42 82,45 87,49', '50,51.7 54,51 61,51 62,54 70,55.3 77,53.5 87,49.2 98,50.5 108,49.5 117,49.7 120,53 127,50 131,48 135,48.4 131,43', '87,49 91,45 97,42.8 105,41.6 111,43.5 117,46.5 117,49.7', '50,51.5 47,49 47,47', '54,42 59,42 66,42 69,41 74,42.6 80,42', '59,42 56,45.5', '88,27 89,22', '92,27 92,21', '98,20 98,17 99,12', '100,20 104,18 105,15 102,13.5', '105,20 107,15 107,11', '125,40 130,42.5', '141,-2.5 141,-9', '110,1.5 115,1.7 117,4',
    '-72,12 -73,8 -67,6 -67,1 -70,1 -70,-4 -74,-7 -70,-11 -69,-15', '-79,1 -75,0 -79,-5', '-67,1 -61,4.5 -60,8', '-61,4.5 -60,1.5 -52,2.5 -51.5,4', '-69,-11 -65,-10 -60,-14 -58,-18'
];

const biomes = [
    // [colour, outline]
    ['#b3d9b0', '-130,58 -100,58 -80,53 -60,55 -62,46 -82,50 -110,53 -124,49'],
    ['#b3d9b0', '-97,46 -66,47 -76,35 -83,29 -95,31'],
    ['#b3d9b0', '-124,49 -117,48 -121,40 -124,40'],
    ['#f2ecd9', '-121,49 -101,50 -99,30 -104,22 -116,30 -121,37'],
    ['#f2eee4', '-165,75 -85,75 -88,62 -108,61 -130,65 -150,66'],
    ['#f2f1ea', '-80,75 -62,75 -62,60 -78,59'],
    ['#ffffff', '-60,80 -15,80 -30,66 -43,60 -55,64'],
    ['#a9d4a2', '-80,8 -52,4 -46,-3 -52,-12 -72,-14 -80,-4'],
    ['#b8dbb1', '-95,18 -84,15 -80,8 -92,15'],
    ['#fbf7ef', '-20,36 60,36 60,14 40,13 -20,14'],
    ['#a9d4a2', '-14,8 10,7 30,4 32,-5 20,-9 8,-2'],
    ['#b8dbb1', '-4,58 30,62 60,60 58,54 25,49 0,45'],
    ['#bfdfb8', '60,72 190,72 170,62 140,52 120,50 90,52 60,55'],
    ['#f3eddb', '44,49 75,52 92,49 118,47 108,37 90,29 62,26 46,32'],
    ['#b8dbb1', '112,49 142,53 130,40 118,40'],
    ['#b8dbb1', '100,31 122,31 118,22 108,8 94,16 92,27 78,29 96,27'],
    ['#a9d4a2', '94,6 120,7 152,-3 150,-11 100,-10'],
    ['#f4f2e8', '140,72 185,72 176,63 155,63']
];

document.getElementById('land').setAttribute('d', land.map(p => toPath(p, true)).join(''));
document.getElementById('clip-path').setAttribute('d', land.map(p => toPath(p, true)).join(''));
document.getElementById('lakes').setAttribute('d', lakes.map(p => toPath(p, true)).join(''));
document.getElementById('borders').setAttribute('d', borders.map(p => toPath(p, false)).join(''));

const biomeLayer = document.getElementById('biomes');
biomes.forEach(([colour, points]) => {
    const path = document.createElementNS('http://www.w3.org/2000/svg', 'path');
    path.setAttribute('d', toPath(points, true));
    path.setAttribute('fill', colour);
    path.setAttribute('filter', 'url(#soft)');
    biomeLayer.appendChild(path);
});
```
